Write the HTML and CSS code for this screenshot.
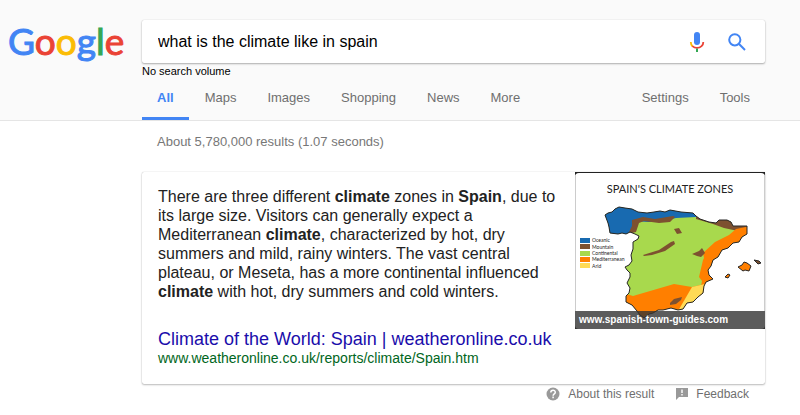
FILE: index.html
```html
<!DOCTYPE html>
<html lang="en">
<head>
	<meta charset="utf-8">
	<title>what is the climate like in spain - Google Search</title>
	<link rel="stylesheet" href="styles.css">
</head>
<body>

<header class="top">
	<a class="logo" href="#"><span class="blue">G</span><span class="red">o</span><span class="yellow">o</span><span class="blue">g</span><span class="green">l</span><span class="red">e</span></a>
	<div class="main">
		<form class="search">
			<input class="query" type="text" aria-label="Search" value="what is the climate like in spain">
			<button class="icon" type="button" aria-label="Search by voice">
				<svg width="16" height="22" viewBox="0 0 16 22" fill="none">
					<rect x="5" y="1" width="6" height="13" rx="3" fill="#4285f4"/>
					<path d="M1.800 11c0 2 .7 3.500 1.800 4.500" stroke="#fbbc05" stroke-width="1.800"/>
					<path d="M3.400 15.200c2.600 2.300 6.600 2.300 9.200 0 1.100-1 1.700-2.400 1.700-4.200" stroke="#ea4335" stroke-width="1.800"/>
					<path d="M8 17.500v3.500" stroke="#34a853" stroke-width="2"/>
				</svg>
			</button>
			<button class="icon" type="submit" aria-label="Search">
				<svg width="18" height="18" viewBox="0 0 18 18" fill="none" stroke="#4285f4" stroke-width="2">
					<circle cx="6.800" cy="6.800" r="5.600"/>
					<path d="M10.800 10.800l6.200 6.200"/>
				</svg>
			</button>
		</form>
		<div class="volume">No search volume</div>
		<nav class="tabs">
			<a class="tab active" href="#">All</a>
			<a class="tab" href="#">Maps</a>
			<a class="tab" href="#">Images</a>
			<a class="tab" href="#">Shopping</a>
			<a class="tab" href="#">News</a>
			<a class="tab" href="#">More</a>
			<a class="tab tools" href="#">Settings</a>
			<a class="tab" href="#">Tools</a>
		</nav>
	</div>
</header>

<main class="results">
	<div class="stats">About 5,780,000 results (1.07 seconds)</div>

	<div class="card">
		<div class="answer">
			<p class="snippet">There are three different <b>climate</b> zones in <b>Spain</b>, due to its large size. Visitors can generally expect a Mediterranean <b>climate</b>, characterized by hot, dry summers and mild, rainy winters. The vast central plateau, or Meseta, has a more continental influenced <b>climate</b> with hot, dry summers and cold winters.</p>
			<a class="title" href="#">Climate of the World: Spain | weatheronline.co.uk</a>
			<cite class="url">www.weatheronline.co.uk/reports/climate/Spain.htm</cite>
		</div>
		<a class="map" href="#">
			<svg width="190" height="157" viewBox="0 0 190 157">
				<defs>
					<path id="spain" d="M30 43L33 41 37 40 40 37 44 35 50 36 57 37 63 40 72 41 79 40 85 39 90 40 95 38 106 40 118 41 121 44 125 47 134 50 141 51 144 48 152 48 156 50 158 54 165 54 172 54 172 62 167 65 164 70 158 71 153 76 147 78 143 85 138 88 136 94 133 98 134 103 138 107 131 110 129 114 128 121 123 125 118 130 112 131 108 137 103 138 96 136 88 138 83 138 78 141 74 142 69 146 65 143 62 139 57 133 51 130 51 124 54 121 55 116 52 111 55 105 55 101 52 98 50 95 54 93 57 89 56 83 58 77 58 70 63 67 64 64 60 62 55 60 51 62 47 61 43 62 35 61 34 55 33 51Z"/>
					<clipPath id="land"><use href="#spain"/></clipPath>
				</defs>
				<rect width="190" height="157" fill="#222"/>
				<rect x="0" y="1" width="190" height="156" rx="4" fill="#fff"/>
				<path d="M.5 4v135M189.500 4v135" stroke="#ccc"/>
				<g clip-path="url(#land)">
					<rect x="20" y="25" width="160" height="125" fill="#a8d94d"/>
					<path d="M20 25h101v20l-20 1-12 3-15 1-17-1v16H20z" fill="#186ab0"/>
					<path d="M57 48l11-3 12 2 18-3 2 1-5 5-11 1-15-2-5 2-3 9-8 2 4-8z" fill="#7d5130"/>
					<path d="M121 44l10-2 45 4v11l-13 2-14-3-11-4-17-5z" fill="#7d5130"/>
					<path d="M161 57l14-3v20l-30 20-3 24-18 6 3-15-3-4 4-17 1-2-1-5 12-11 14-7z" fill="#ff7f00"/>
					<path d="M48 121l10 3 41-12 18 3 13-3-4 38H48z" fill="#ff7f00"/>
					<path d="M117 115l13-3v12l-18 14-9 1z" fill="#ffda55"/>
				</g>
				<path d="M99 57l5-1 3 5-5 1zM68 83l16-5 12-8 3-1 1 3-10 7-13 4-8 1zM117 82l7-3 3-3 3 5-4 4-4-1zM95 131l4-4 8-2-1 3-5 4-6 1z" fill="#7d5130"/>
				<use href="#spain" fill="none" stroke="#262626" stroke-width="1"/>
				<path d="M163 95l4-2 2-3 3 1 4 3-2 5-4-1-2 1zM150 105l3-3 2 1-2 3z" fill="#ff7f00" stroke="#262626"/>
				<path d="M179 88l5 1 2 2-3 1z" fill="#7d5130" stroke="#262626"/>
				<text class="map-title" x="95" y="21" text-anchor="middle">SPAIN'S CLIMATE ZONES</text>
				<g class="legend">
					<rect x="5" y="66" width="10" height="5" fill="#186ab0"/><text x="17" y="70">Oceanic</text>
					<rect x="5" y="72" width="10" height="5" fill="#7d5130"/><text x="17" y="77">Mountain</text>
					<rect x="5" y="79" width="10" height="5" fill="#a8d94d"/><text x="17" y="83">Continental</text>
					<rect x="5" y="85" width="10" height="5" fill="#ff7f00"/><text x="17" y="89">Mediterranean</text>
					<rect x="5" y="91" width="10" height="5" fill="#ffda55"/><text x="17" y="96">Arid</text>
				</g>
				<rect y="139" width="190" height="18" fill="#333" fill-opacity=".8"/>
				<text class="source" x="4" y="151">www.spanish-town-guides.com</text>
			</svg>
		</a>
	</div>

	<footer class="links">
		<a class="link" href="#">
			<svg width="14" height="14" viewBox="0 0 14 14" fill="none">
				<circle cx="7" cy="7" r="6.500" fill="#999"/>
				<path d="M4.800 5.500c0-3 4.500-3 4.500-.2 0 1.600-2.200 1.700-2.200 3.400M7.100 9.600v1.700" stroke="#fff" stroke-width="1.500"/>
			</svg>
			About this result
		</a>
		<a class="link" href="#">
			<svg width="12" height="12" viewBox="0 0 12 12">
				<path d="M0 0h12v9H3l-3 3z" fill="#999"/>
				<path d="M5.300 1.500h1.400v3.500H5.300zM5.300 6h1.400v1.500H5.300z" fill="#fff"/>
			</svg>
			Feedback
		</a>
	</footer>
</main>

</body>
</html>
```

FILE: styles.css
```css
body {
	margin: 0;
	background: #fff;
	color: #222;
	font-family: "Liberation Sans", Arial, sans-serif;
	font-size: 13px;
}
a { text-decoration: none; }

/* header */
.top {
	display: flex;
	padding: 20px 35px 0 8px;
	background: #fafafa;
	border-bottom: 1px solid #e5e5e5;
}
.logo {
	flex: none;
	width: 134px;
	font-family: Lato, sans-serif;
	font-size: 37px;
	line-height: 42px;
	-webkit-text-stroke: 1px;
}
.blue { color: #4285f4; }
.red { color: #ea4335; }
.yellow { color: #fbbc05; }
.green { color: #34a853; }
.main {
	flex: 1;
	min-width: 0;
}
.search {
	display: flex;
	align-items: center;
	height: 43px;
	padding: 0 16px;
	background: #fff;
	border-radius: 2px;
	box-shadow: 0 1px 2px rgba(0,0,0,.3), 0 0 1px rgba(0,0,0,.2);
}
.query {
	flex: 1;
	min-width: 0;
	padding: 0;
	border: 0;
	outline: 0;
	background: none;
	color: #000;
	font-family: inherit;
	font-size: 16px;
}
.icon {
	display: flex;
	justify-content: center;
	width: 24px;
	margin-left: 16px;
	padding: 0;
	border: 0;
	background: none;
}
.volume {
	padding-top: 2px;
	color: #000;
	font-size: 11px;
	line-height: 13px;
}
.tabs {
	display: flex;
	gap: 1px;
	padding-top: 2px;
}
.tab {
	padding: 10px 15px 11px;
	border-bottom: 3px solid transparent;
	color: #6f6f6f;
	line-height: 16px;
}
.active {
	border-color: #4285f4;
	color: #4285f4;
	font-weight: bold;
}
.tools { margin-left: auto; }

/* results */
.results { padding: 0 35px 0 142px; }
.stats {
	padding: 13px 15px 22px;
	color: #777;
	line-height: 16px;
}
.card {
	display: flex;
	align-items: flex-start;
	justify-content: space-between;
	border-radius: 2px;
	box-shadow: 0 1px 2px rgba(0,0,0,.25), 0 0 1px rgba(0,0,0,.3);
}
.answer {
	flex: 1;
	padding: 15px 16px 17px;
}
.snippet {
	margin: 0 0 28px;
	font-size: 16px;
	line-height: 19px;
}
.title {
	display: block;
	color: #1a0dab;
	font-size: 18px;
	line-height: 21px;
}
.url {
	display: block;
	color: #006621;
	font-size: 14px;
	font-style: normal;
	line-height: 17px;
}
.map { flex: none; }
.map svg { display: block; }
.map-title {
	fill: #222;
	font: 11px Lato, sans-serif;
}
.legend {
	fill: #222;
	font: 5px Lato, sans-serif;
}
.source {
	fill: #fff;
	font: bold 10px "Liberation Sans", Arial, sans-serif;
}

.links {
	display: flex;
	justify-content: flex-end;
	gap: 22px;
	padding: 2px 16px 0;
}
.link {
	display: flex;
	align-items: center;
	gap: 8px;
	color: #6f6f6f;
	font-size: 12px;
	line-height: 16px;
}
```
